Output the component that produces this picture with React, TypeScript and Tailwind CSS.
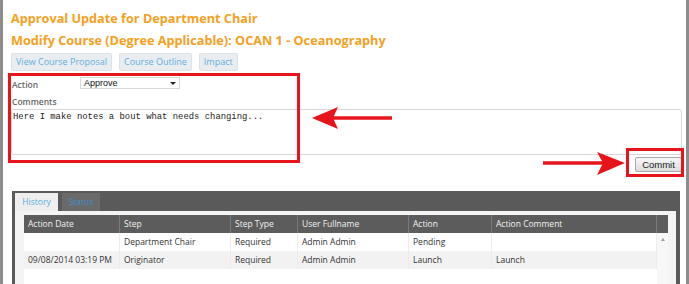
import React from 'react'

const cols = [
  { name: 'Action Date', w: 'w-[96px]' },
  { name: 'Step', w: 'w-[111px]' },
  { name: 'Step Type', w: 'w-[67px]' },
  { name: 'User Fullname', w: 'w-[111px]' },
  { name: 'Action', w: 'w-[83px]' },
  { name: 'Action Comment', w: 'w-[165px]' },
]

const rows = [
  ['', 'Department Chair', 'Required', 'Admin Admin', 'Pending', ''],
  ['09/08/2014 03:19 PM', 'Originator', 'Required', 'Admin Admin', 'Launch', 'Launch'],
]

export default function App() {
  return (
    <div className="relative w-[689px] h-[284px] overflow-hidden bg-white border-l-[3px] border-r-[3px] border-[#8c8c8c] font-['Open_Sans',sans-serif]">
      <div className="pl-[8px] pt-[7px] pr-[4px]">
        <div className="text-[12.7px] leading-[22px] font-bold text-[#f5a01e]">Approval Update for Department Chair</div>
        <div className="text-[12.7px] leading-[22px] font-bold text-[#f5a01e]">Modify Course (Degree Applicable): OCAN 1 - Oceanography</div>

        <div className="flex gap-[7px] mt-[2px]">
          <span className="h-[18px] px-[4px] flex items-center bg-[#e9edf0] border border-[#dde2e6] rounded-[2px] text-[9px] text-[#62afdf]">View Course Proposal</span>
          <span className="h-[18px] px-[4px] flex items-center bg-[#e9edf0] border border-[#dde2e6] rounded-[2px] text-[9px] text-[#62afdf]">Course Outline</span>
          <span className="h-[18px] px-[4px] flex items-center bg-[#e9edf0] border border-[#dde2e6] rounded-[2px] text-[9px] text-[#62afdf]">Impact</span>
        </div>

        <div className="flex items-end mt-[6px] h-[13px]">
          <span className="w-[69px] pl-[1px] text-[8.5px] leading-[10px] font-semibold text-[#666]">Action</span>
          <div className="w-[100px] h-[12px] border border-[#d8d8d8] flex items-center justify-between px-[3px] mb-[1px]">
            <span className="text-[9px] leading-[10px] text-[#111] font-['Liberation_Sans',sans-serif]">Approve</span>
            <span className="w-0 h-0 border-l-[3px] border-r-[3px] border-t-[3px] border-l-transparent border-r-transparent border-t-[#222]"></span>
          </div>
        </div>

        <div className="mt-[7px] pl-[1px] text-[8.5px] leading-[10px] font-semibold text-[#666]">Comments</div>
        <div className="relative mt-[2px] w-[671px] h-[46px] border border-[#d6d6d6] rounded-[3px] px-[1px] pt-[2px] text-[8.9px] leading-[11px] text-[#222] font-['Liberation_Mono',monospace]">
          Here I make notes a bout what needs changing...
          <span className="absolute right-[1px] bottom-[1px] text-[5px] leading-[5px] text-[#bbb]">⋰</span>
        </div>

        <div className="flex justify-end mt-[2px]">
          <button className="w-[47px] h-[15px] border border-[#a9a9a9] rounded-[2px] bg-gradient-to-b from-[#f8f8f8] to-[#dcdcdc] text-[9.5px] leading-[13px] text-[#222] font-['Liberation_Sans',sans-serif]">Commit</button>
        </div>
      </div>

      <div className="absolute left-[9px] top-[191px] w-[668px] h-[100px] bg-[#5a5a5a] pl-[3px] pr-[4px] pt-[2px]">
        <div className="flex gap-[4px] h-[18px]">
          <span className="w-[43px] h-[18px] bg-[#eeeeee] flex items-center justify-center text-[8.5px] text-[#5aaee0]">History</span>
          <span className="w-[38px] h-[18px] bg-[#6a6a6a] flex items-center justify-center text-[8.5px] text-[#3d8fcc]">Status</span>
        </div>
        <div className="bg-[#f4f4f4] h-[80px] pl-[9px] pt-[4px] pr-[8px]">
          <div className="bg-white">
            <div className="flex h-[18px] bg-[#5c5c5c]">
              {cols.map((c) => (
                <div key={c.name} className={`${c.w} border-r border-[#7a7a7a] pl-[4px] flex items-center whitespace-nowrap text-[8.5px] text-[#f2f2f2]`}>{c.name}</div>
              ))}
              <div className="w-[11px]"></div>
            </div>
            {rows.map((r, i) => (
              <div key={i} className={`flex h-[18px] ${i === 1 ? 'bg-[#f2f2f2]' : 'bg-white'}`}>
                {r.map((v, j) => (
                  <div key={j} className={`${cols[j].w} border-r border-[#ececec] pl-[4px] flex items-center whitespace-nowrap text-[8.5px] text-[#333]`}>{v}</div>
                ))}
                <div className="w-[11px] bg-[#f7f7f7] flex justify-center">
                  {i === 0 && <span className="mt-[5px] w-0 h-0 border-l-[2px] border-r-[2px] border-b-[3px] border-l-transparent border-r-transparent border-b-[#999]"></span>}
                </div>
              </div>
            ))}
            <div className="flex h-[30px]">
              <div className="flex-1"></div>
              <div className="w-[11px] bg-[#f7f7f7]"></div>
            </div>
          </div>
        </div>
      </div>

      <div className="absolute left-[5px] top-[73px] w-[292px] h-[90px] border-[3px] border-[#e8141b]"></div>
      <div className="absolute left-[623px] top-[148px] w-[58px] h-[29px] border-[3px] border-[#e8141b]"></div>

      <svg className="absolute left-0 top-0" width="689" height="284" viewBox="0 0 689 284">
        <line x1="389" y1="118" x2="330" y2="118" stroke="#e8141b" strokeWidth="3.5" />
        <polygon points="309,118 335,107 330,118 335,129" fill="#e8141b" />
        <line x1="540" y1="163" x2="600" y2="163" stroke="#e8141b" strokeWidth="3.5" />
        <polygon points="622,163 594,152 600,163 594,175" fill="#e8141b" />
      </svg>
    </div>
  )
}
